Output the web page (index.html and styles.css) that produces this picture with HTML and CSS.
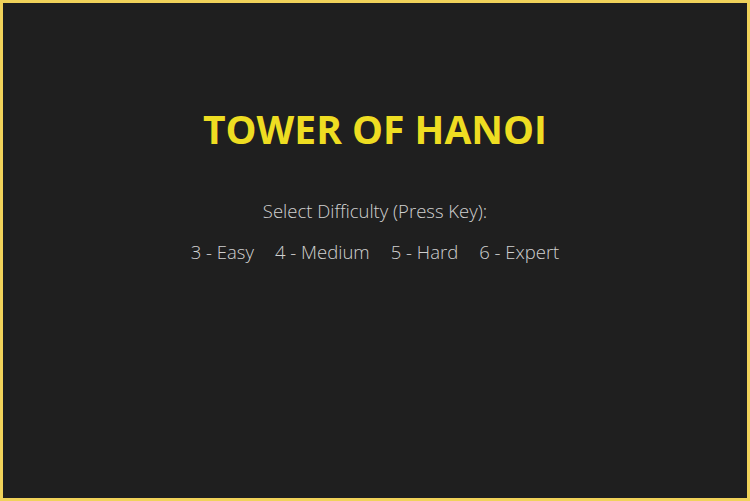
FILE: index.html
```html
<!DOCTYPE html>
<html>
<head>
<meta charset="utf-8">
<link rel="stylesheet" href="styles.css">
</head>
<body>
<div class="frame">
  <h1 class="title">TOWER OF HANOI</h1>
  <p class="prompt">Select Difficulty (Press Key):</p>
  <p class="options"><span>3 - Easy</span><span>4 - Medium</span><span>5 - Hard</span><span>6 - Expert</span></p>
</div>
</body>
</html>
```
FILE: styles.css
```css
html, body { margin: 0; padding: 0; }
body { width: 750px; height: 501px; background: #1e1e1e; font-family: "Open Sans", sans-serif; }
.frame {
  box-sizing: border-box;
  width: 750px; height: 501px;
  border: 3px solid #f0d25a;
  background: #1f1f1f;
  display: flex; flex-direction: column; align-items: center;
  padding-top: 100px;
}
.title {
  margin: 0;
  color: #eedd22;
  font-size: 39px;
  font-weight: 700;
  line-height: 52px;
}
.prompt {
  margin: 43px 0 0 0;
  color: #d0d0d0;
  font-size: 18.5px;
  font-weight: 300;
  line-height: 26px;
}
.options {
  margin: 15px 0 0 0;
  color: #d0d0d0;
  font-size: 18.5px;
  font-weight: 300;
  line-height: 26px;
  display: flex; gap: 21px;
}
```
